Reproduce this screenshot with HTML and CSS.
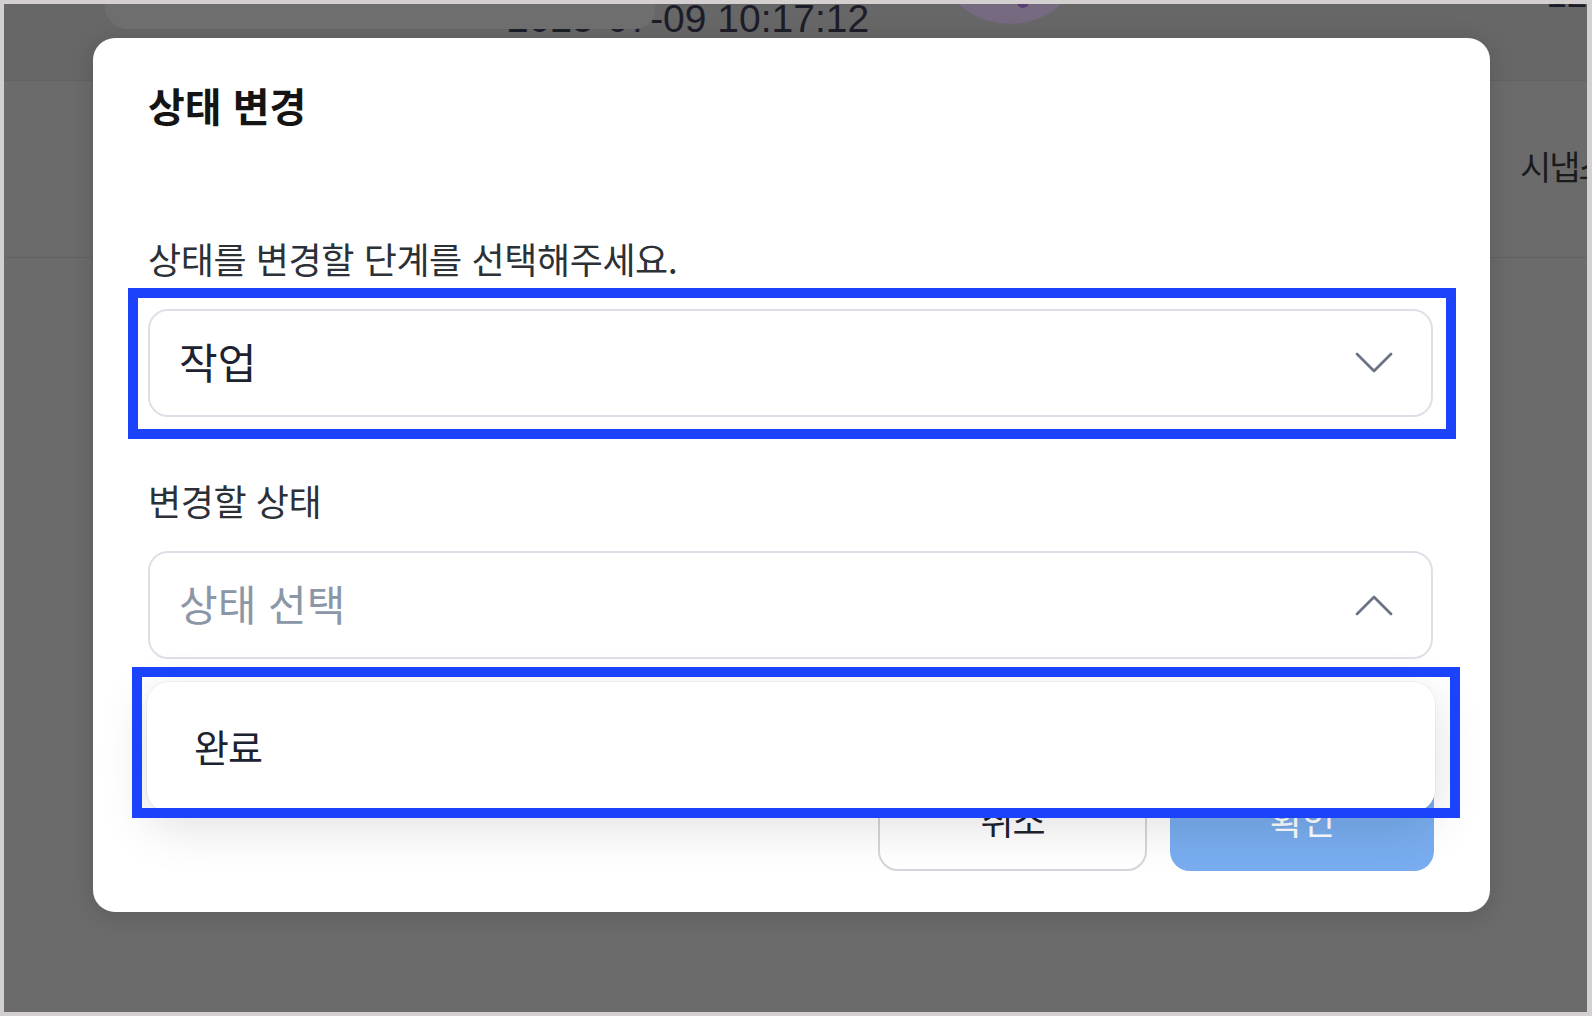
FILE: index.html
```html
<!DOCTYPE html>
<html lang="ko">
<head>
<meta charset="utf-8">
<title>상태 변경</title>
<link rel="stylesheet" href="styles.css">
</head>
<body>
<div class="screen">
  <div class="page">
    <div class="topbar">
      <div class="topcard"></div>
      <div class="datetime">2025-07-09 10:17:12</div>
      <div class="avatar"><span class="avatar-mark"></span></div>
      <div class="corner-num">12</div>
    </div>
    <div class="row">
      <span class="snap">시냅스</span>
    </div>
  </div>

  <div class="modal">
    <h2 class="title">상태 변경</h2>
    <p class="desc">상태를 변경할 단계를 선택해주세요.</p>
    <div class="select">
      <span class="value">작업</span>
      <svg class="chev" width="40" height="24" viewBox="0 0 40 24"><polyline points="3,3 20,20 37,3" fill="none" stroke="#6b7384" stroke-width="2.8" stroke-linecap="round" stroke-linejoin="round"/></svg>
    </div>
    <p class="label">변경할 상태</p>
    <div class="select-wrap">
      <div class="select select2">
        <span class="placeholder">상태 선택</span>
        <svg class="chev" width="40" height="24" viewBox="0 0 40 24"><polyline points="3,21 20,4 37,21" fill="none" stroke="#6b7384" stroke-width="2.8" stroke-linecap="round" stroke-linejoin="round"/></svg>
      </div>
      <div class="menu">
        <div class="option">완료</div>
      </div>
    </div>
    <div class="actions">
      <button class="btn cancel">취소</button>
      <button class="btn confirm">확인</button>
    </div>
    <div class="mark mark1"></div>
    <div class="mark mark2"></div>
  </div>
</div>
</body>
</html>
```

FILE: styles.css
```css
* { box-sizing: border-box; }
html, body { margin: 0; padding: 0; }
body {
  background: #d4d0d0;
  width: 1592px;
  height: 1016px;
  overflow: hidden;
  font-family: "Noto Sans CJK KR", "Noto Sans", sans-serif;
}
.screen {
  position: relative;
  margin: 4px 5px 4px 4px;
  width: 1583px;
  height: 1008px;
  background: #6b6b6b;
  overflow: hidden;
}

/* dimmed background page */
.topbar {
  position: relative;
  height: 77px;
  background: #676767;
  border-bottom: 1px solid #636363;
  display: flex;
  align-items: flex-start;
}
.datetime {
  margin-left: 503px;
  margin-top: -5px;
  font-family: "Liberation Sans", Arial, sans-serif;
  font-size: 39px;
  line-height: 39px;
  color: #1d1d29;
  white-space: nowrap;
}
.topcard {
  position: absolute;
  left: 101px;
  top: -20px;
  width: 550px;
  height: 45px;
  background: #6e6e6e;
  border-radius: 0 0 20px 22px;
  z-index: 1;
}
.avatar {
  flex: none;
  margin-left: 65px;
  margin-top: -132px;
  width: 152px;
  height: 152px;
  border-radius: 50%;
  background: #756a80;
  display: flex;
  justify-content: center;
  align-items: flex-end;
  padding: 0 0 0 26px;
}
.avatar-mark {
  width: 12px;
  height: 8px;
  margin-bottom: 16px;
  border-radius: 0 0 6px 6px;
  background: #5a3f74;
}
.corner-num {
  margin-left: 460px;
  margin-top: -28px;
  font-family: "Liberation Sans", Arial, sans-serif;
  font-size: 37px;
  line-height: 37px;
  color: #1d1d29;
}
.row {
  height: 177px;
  border-bottom: 1px solid #626262;
  padding: 68px 0 0 1516px;
  white-space: nowrap;
}
.snap {
  font-size: 34px;
  line-height: 34px;
  color: #1b1b1b;
  letter-spacing: -2px;
}

/* modal */
.modal {
  position: absolute;
  left: 89px;
  top: 34px;
  width: 1397px;
  height: 874px;
  background: #ffffff;
  border-radius: 22px;
  padding: 47px 57px 43px 55px;
  box-shadow: 0 4px 24px rgba(0,0,0,0.15);
}
.title {
  margin: 0;
  font-size: 40px;
  line-height: 40px;
  font-weight: 700;
  color: #141414;
  letter-spacing: 0;
}
.desc, .label {
  margin: 0;
  font-size: 36px;
  line-height: 36px;
  color: #2c3037;
  letter-spacing: -0.4px;
}
.desc { margin-top: 115px; }
.label { margin-top: 65px; }
.select {
  margin-top: 33px;
  height: 108px;
  border: 2px solid #dde1e7;
  border-radius: 20px;
  display: flex;
  align-items: center;
  justify-content: space-between;
  padding: 0 37px 5px 29px;
  font-size: 42px;
  line-height: 42px;
  letter-spacing: 0;
}
.select .chev { margin-top: 5px; }
.value { color: #1c2230; }
.placeholder { color: #8b96a7; }
.chev { display: block; }
.select-wrap {
  position: relative;
  margin-top: 33px;
}
.select2 { margin-top: 0; }
.menu {
  position: absolute;
  left: -1px;
  top: 131px;
  width: 1288px;
  height: 130px;
  background: #ffffff;
  border-radius: 22px;
  box-shadow: 0 0 0 1px rgba(0,0,0,0.04), 0 14px 50px rgba(0,0,0,0.13);
  display: flex;
  align-items: center;
  padding: 0 0 3px 47px;
  z-index: 2;
}
.option {
  font-size: 38px;
  line-height: 38px;
  color: #1c2230;
  letter-spacing: -1px;
}
.actions {
  margin-top: 100px;
  display: flex;
  justify-content: flex-end;
  gap: 23px;
  margin-right: -1px;
}
.btn {
  height: 112px;
  border-radius: 20px;
  font-family: "Noto Sans CJK KR", "Noto Sans", sans-serif;
  font-size: 36px;
  line-height: 36px;
  letter-spacing: -1px;
  display: flex;
  align-items: center;
  justify-content: center;
  padding: 7px 0 0 0;
}
.cancel {
  width: 269px;
  background: #ffffff;
  border: 2px solid #d3d6db;
  color: #1c2230;
}
.confirm {
  width: 264px;
  background: #79adef;
  border: none;
  color: #ffffff;
}
.mark {
  position: absolute;
  width: 1328px;
  height: 151px;
  border: 10px solid #1b43fb;
  z-index: 3;
}
.mark1 { left: 35px; top: 250px; }
.mark2 { left: 39px; top: 629px; }
```
